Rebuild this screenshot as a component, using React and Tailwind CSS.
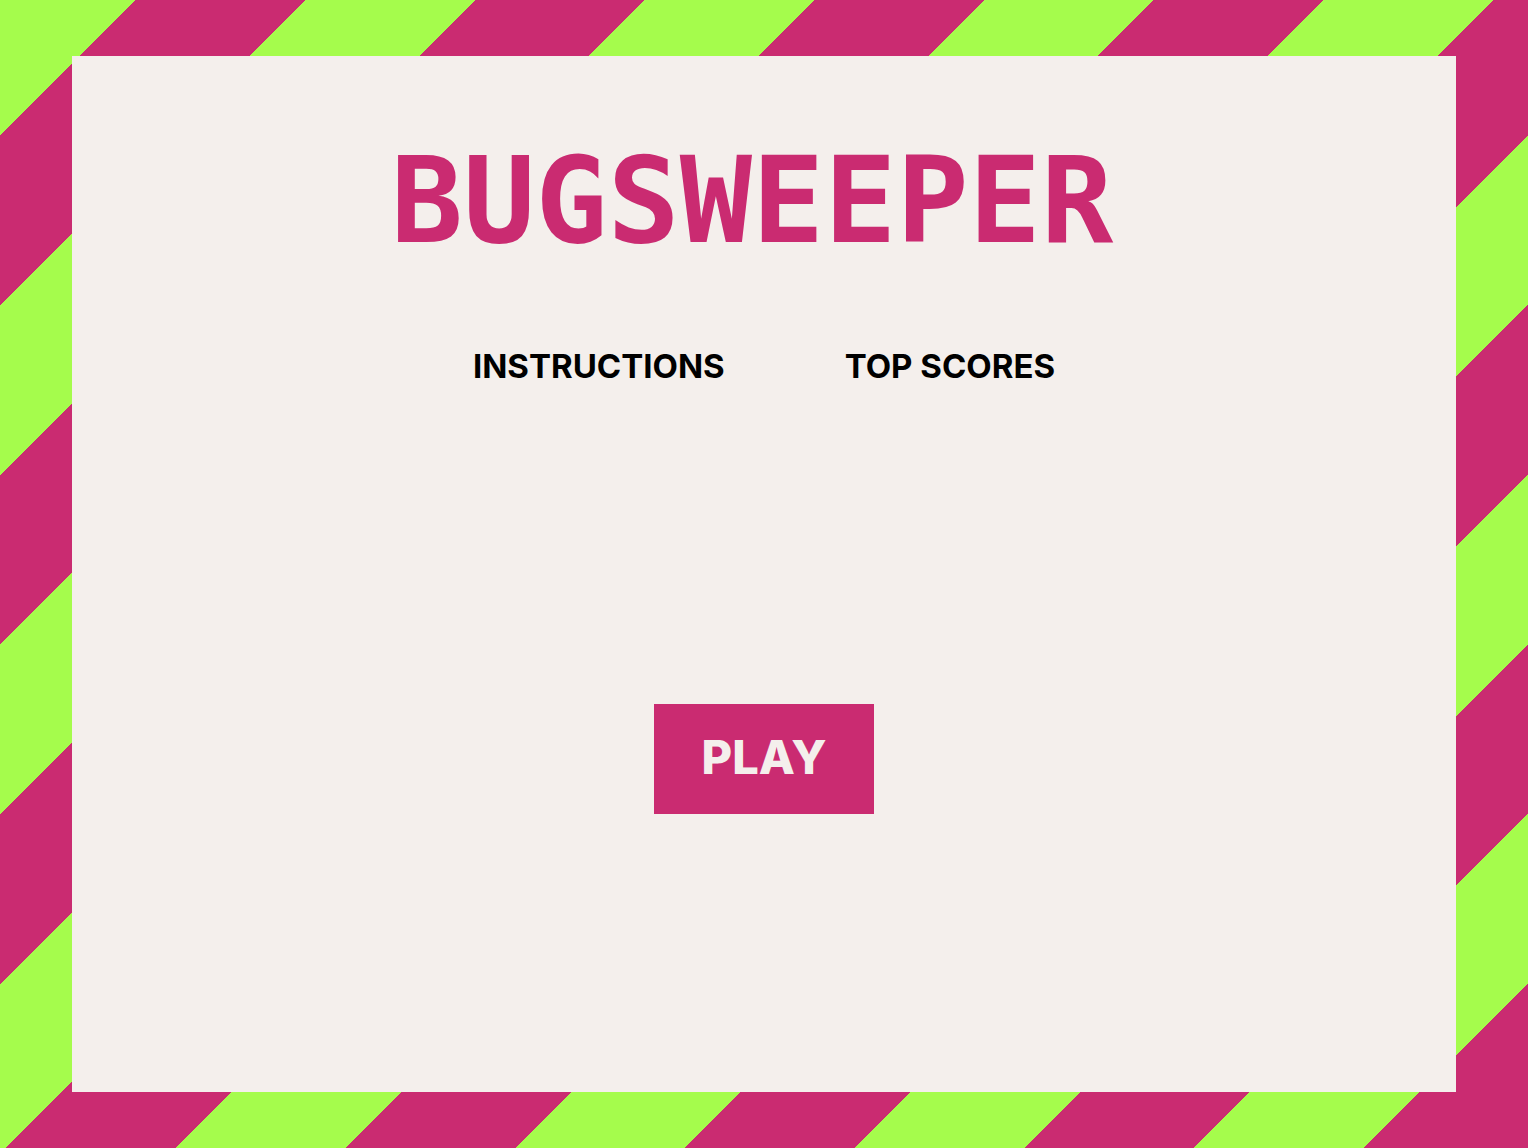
const links = [
  { label: "INSTRUCTIONS", href: "#instructions" },
  { label: "TOP SCORES", href: "#top-scores" },
];

function Title() {
  return (
    <h1 className="pr-6 font-['DejaVu_Sans_Mono',monospace] text-[120px] leading-[88px] font-bold text-[#ca2b71]">
      BUGSWEEPER
    </h1>
  );
}

function Menu() {
  return (
    <nav className="mt-[101px] flex justify-center gap-[120px]">
      {links.map((link) => (
        <a key={link.href} href={link.href} className="text-[33px] leading-10 font-bold text-black">
          {link.label}
        </a>
      ))}
    </nav>
  );
}

export default function App() {
  return (
    <div className="flex min-h-screen bg-[repeating-linear-gradient(135deg,#a5fc4c_0px,#a5fc4c_96px,#ca2b71_96px,#ca2b71_216px,#a5fc4c_216px,#a5fc4c_240px)] px-18 py-14 font-['Inter',sans-serif]">
      <main className="flex grow flex-col items-center bg-[#f4efec] pt-[101px] pb-10">
        <Title />
        <Menu />
        <button
          type="button"
          className="mt-[318px] bg-[#ca2b71] px-12 pt-[22px] pb-[26px] text-[47px] leading-[62px] font-extrabold text-[#f4efec]"
        >
          PLAY
        </button>
      </main>
    </div>
  );
}
